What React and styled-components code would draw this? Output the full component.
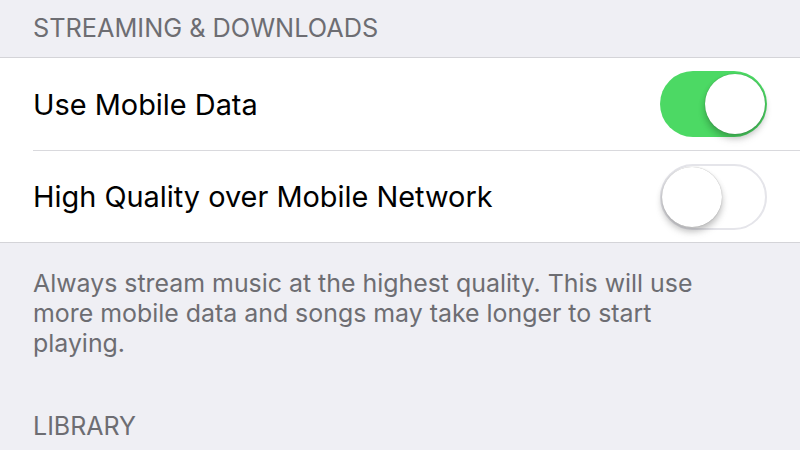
import React from "react";
import styled, { createGlobalStyle } from "styled-components";

const Global = createGlobalStyle`
  html, body { margin: 0; padding: 0; background: #efeff4; }
  body { width: 800px; height: 450px; overflow: hidden; font-family: Inter, "Noto Sans", sans-serif; -webkit-font-smoothing: antialiased; }
`;

const Page = styled.div`
  width: 800px;
  height: 450px;
  background: #efeff4;
  display: flex;
  flex-direction: column;
`;

const SectionHeader = styled.div`
  height: 57px;
  box-sizing: border-box;
  padding: 13px 0 0 33px;
  font-size: 25.3px;
  color: #6d6d72;
  line-height: 30px;
`;

const Group = styled.div`
  background: #fff;
  border-top: 1px solid #d4d4d8;
  border-bottom: 1px solid #d4d4d8;
`;

const Row = styled.div`
  height: 92px;
  display: flex;
  align-items: center;
  justify-content: space-between;
  margin-left: 33px;
  padding-right: 33px;
  box-sizing: border-box;
  border-top: ${(p) => (p.$first ? "none" : "1px solid #d9d9dd")};
`;

const Label = styled.span`
  font-size: 28.9px;
  color: #000;
`;

const Track = styled.div`
  position: relative;
  width: 107px;
  height: 66px;
  border-radius: 33px;
  box-sizing: border-box;
  background: ${(p) => (p.$on ? "#4cd964" : "#fff")};
  border: ${(p) => (p.$on ? "none" : "2px solid #e5e5ea")};
`;

const Knob = styled.div`
  position: absolute;
  top: ${(p) => (p.$on ? "3px" : "1px")};
  ${(p) => (p.$on ? "right: 2px;" : "left: 0px;")}
  width: 60px;
  height: 60px;
  border-radius: 50%;
  background: #fff;
  box-shadow: 0 4px 6px rgba(0, 0, 0, 0.2), 0 0 1px rgba(0, 0, 0, 0.35), 0 6px 10px rgba(0, 0, 0, 0.08);
`;

const Footer = styled.div`
  padding: 25px 33px 0 33px;
  font-size: 24.9px;
  line-height: 30px;
  color: #6d6d72;
`;

const Line = styled.span`
  display: block;
`;

const LowerHeader = styled(SectionHeader)`
  padding-top: 53px;
  font-size: 25px;
`;

function Toggle({ on }) {
  return (
    <Track $on={on}>
      <Knob $on={on} />
    </Track>
  );
}

export default function App() {
  return (
    <Page>
      <Global />
      <SectionHeader>STREAMING &amp; DOWNLOADS</SectionHeader>
      <Group>
        <Row $first>
          <Label>Use Mobile Data</Label>
          <Toggle on />
        </Row>
        <Row>
          <Label>High Quality over Mobile Network</Label>
          <Toggle on={false} />
        </Row>
      </Group>
      <Footer>
        <Line>Always stream music at the highest quality. This will use</Line>
        <Line>more mobile data and songs may take longer to start</Line>
        <Line>playing.</Line>
      </Footer>
      <LowerHeader>LIBRARY</LowerHeader>
    </Page>
  );
}
